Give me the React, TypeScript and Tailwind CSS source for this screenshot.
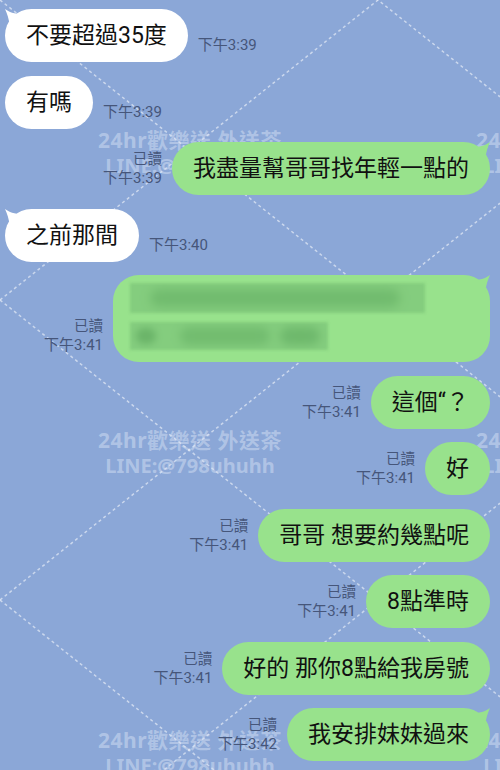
import React from "react";

type Msg = {
  side: "l" | "r";
  text?: string;
  time: string;
  tail?: boolean;
  blurred?: boolean;
};

const msgs: Msg[] = [
  { side: "l", text: "不要超過35度", time: "下午3:39", tail: true },
  { side: "l", text: "有嗎", time: "下午3:39" },
  { side: "r", text: "我盡量幫哥哥找年輕一點的", time: "下午3:39", tail: true },
  { side: "l", text: "之前那間", time: "下午3:40", tail: true },
  { side: "r", blurred: true, time: "下午3:41", tail: true },
  { side: "r", text: "這個“？", time: "下午3:41" },
  { side: "r", text: "好", time: "下午3:41" },
  { side: "r", text: "哥哥 想要約幾點呢", time: "下午3:41" },
  { side: "r", text: "8點準時", time: "下午3:41" },
  { side: "r", text: "好的 那你8點給我房號", time: "下午3:41" },
  { side: "r", text: "我安排妹妹過來", time: "下午3:42", tail: true },
];

function Pattern() {
  const k = 150 / 189;
  const rows = [-1, 0, 1, 2, 3, 4];
  return (
    <svg className="absolute inset-0" width="500" height="770" viewBox="0 0 500 770">
      {rows.map((n) => (
        <g key={n} stroke="#ffffff" strokeOpacity="0.55" strokeWidth="1.5" strokeDasharray="3 3">
          <line x1="0" y1={300 * n} x2="500" y2={300 * n + 500 * k} />
          <line x1="0" y1={300 * n} x2="500" y2={300 * n - 500 * k} />
        </g>
      ))}
    </svg>
  );
}

function Watermark({ className }: { className: string }) {
  return (
    <div className={"absolute flex flex-col items-center font-bold text-[#dfe8f8]/45 font-['Noto_Sans','Noto_Sans_CJK_TC',sans-serif] " + className}>
      <div className="text-[21px] leading-[26px] tracking-[0.5px] whitespace-nowrap">24hr歡樂送 外送茶</div>
      <div className="text-[20px] leading-[26px] whitespace-nowrap">LINE:@798uhuhh</div>
    </div>
  );
}

function Tail({ side, color }: { side: "l" | "r"; color: string }) {
  if (side === "l") {
    return (
      <svg className="absolute left-0 top-0" width="18" height="18" viewBox="0 0 18 18">
        <path d="M0 0 C4 3 9 5 18 5 L18 18 L5 18 C4 10 2 4 0 0 Z" fill={color} />
      </svg>
    );
  }
  return (
    <svg className="absolute right-0 top-0" width="18" height="18" viewBox="0 0 18 18">
      <path d="M18 0 C14 3 9 5 0 5 L0 18 L13 18 C14 10 16 4 18 0 Z" fill={color} />
    </svg>
  );
}

function Bubble({ m }: { m: Msg }) {
  const color = m.side === "l" ? "#ffffff" : "#98e28c";
  if (m.blurred) {
    return (
      <div className="relative h-[87px] w-[377px] rounded-[26px] bg-[#98e28c] pl-[17px] pt-[8px] flex flex-col gap-[9px]">
        <Tail side="r" color={color} />
        <div className="relative h-[30px] w-[295px] bg-[#84cd7e] blur-[1.5px] overflow-hidden">
          <div className="absolute left-[20px] top-[6px] h-[18px] w-[250px] rounded-full bg-[#71bb6e] blur-[5px]" />
        </div>
        <div className="relative h-[28px] w-[198px] bg-[#84cd7e] blur-[1.5px] overflow-hidden">
          <div className="absolute left-[6px] top-[6px] h-[16px] w-[20px] rounded-full bg-[#6bb469] blur-[3px]" />
          <div className="absolute left-[50px] top-[5px] h-[18px] w-[90px] rounded-full bg-[#72bc6f] blur-[4px]" />
          <div className="absolute left-[150px] top-[5px] h-[18px] w-[40px] rounded-full bg-[#6eb86c] blur-[4px]" />
        </div>
      </div>
    );
  }
  return (
    <div
      className={
        "relative h-[53px] flex items-center rounded-full px-[21px] text-[23px] leading-[29px] text-[#111111] whitespace-nowrap " +
        (m.side === "l" ? "bg-white" : "bg-[#98e28c]")
      }
    >
      {m.tail && <Tail side={m.side} color={color} />}
      <span className="relative">{m.text}</span>
    </div>
  );
}

export default function App() {
  return (
    <div className="relative w-[500px] h-[770px] overflow-hidden bg-[#8ba7d7] font-['Roboto','Noto_Sans_CJK_TC',sans-serif]">
      <Pattern />
      <Watermark className="left-[190px] top-[127px] -translate-x-1/2" />
      <Watermark className="left-[568px] top-[127px] -translate-x-1/2" />
      <Watermark className="left-[190px] top-[427px] -translate-x-1/2" />
      <Watermark className="left-[568px] top-[427px] -translate-x-1/2" />
      <Watermark className="left-[190px] top-[727px] -translate-x-1/2" />
      <Watermark className="left-[568px] top-[727px] -translate-x-1/2" />

      <div className="relative flex flex-col gap-[13.5px] pt-[9px]">
        {msgs.map((m, i) =>
          m.side === "l" ? (
            <div key={i} className="flex items-end gap-[10px] pl-[5px]">
              <Bubble m={m} />
              <div className="pb-[7px] text-[15px] leading-[19px] text-[#46567a]">{m.time}</div>
            </div>
          ) : (
            <div key={i} className="flex items-end justify-end gap-[10px] pr-[10px]">
              <div className="pb-[7px] flex flex-col items-end text-[#46567a] leading-[19px]">
                <span className="text-[14.5px]">已讀</span>
                <span className="text-[15px]">{m.time}</span>
              </div>
              <Bubble m={m} />
            </div>
          )
        )}
      </div>
    </div>
  );
}
